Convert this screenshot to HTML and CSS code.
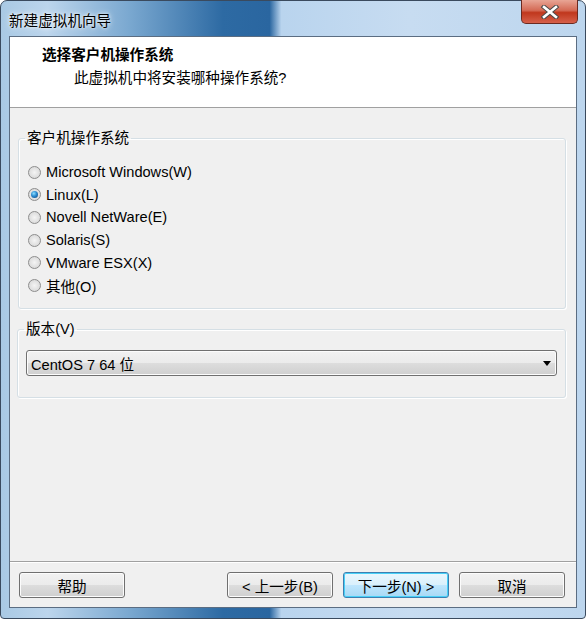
FILE: index.html
```html
<!DOCTYPE html>
<html lang="zh-CN">
<head>
    <meta charset="UTF-8">
    <title>新建虚拟机向导</title>
    <link rel="stylesheet" href="styles.css">
</head>
<body>
    <div class="window">
        <div class="titlebar">
            <span class="title">新建虚拟机向导</span>
            <div class="close-btn">
                <svg width="20" height="14" viewBox="0 0 20 14">
                    <path d="M4 2 L16 12 M16 2 L4 12" stroke="#4a4a4a" stroke-width="4.6" stroke-linecap="square"/>
                    <path d="M4 2 L16 12 M16 2 L4 12" stroke="#ffffff" stroke-width="2.6" stroke-linecap="square"/>
                </svg>
            </div>
        </div>

        <div class="client">
            <div class="header">
                <div class="header-title">选择客户机操作系统</div>
                <div class="header-sub">此虚拟机中将安装哪种操作系统?</div>
            </div>

            <div class="body">
                <fieldset class="group os-group">
                    <legend>客户机操作系统</legend>
                    <div class="radios">
                        <label class="radio"><span class="dot"></span>Microsoft Windows(W)</label>
                        <label class="radio"><span class="dot checked"></span>Linux(L)</label>
                        <label class="radio"><span class="dot"></span>Novell NetWare(E)</label>
                        <label class="radio"><span class="dot"></span>Solaris(S)</label>
                        <label class="radio"><span class="dot"></span>VMware ESX(X)</label>
                        <label class="radio"><span class="dot"></span>其他(O)</label>
                    </div>
                </fieldset>

                <fieldset class="group ver-group">
                    <legend>版本(V)</legend>
                    <div class="combo">
                        <span>CentOS 7 64 位</span>
                        <span class="arrow"></span>
                    </div>
                </fieldset>
            </div>

            <div class="footer">
                <button class="btn">帮助</button>
                <div class="spacer"></div>
                <button class="btn">&lt; 上一步(B)</button>
                <button class="btn default">下一步(N) &gt;</button>
                <button class="btn">取消</button>
            </div>
        </div>
    </div>
</body>
</html>
```

FILE: styles.css
```css
body {
    margin: 0;
    font-family: "Liberation Sans", "Noto Sans CJK SC", sans-serif;
    font-size: 14.6px;
    color: #000;
    background: #fff;
}
.window {
    width: 586px;
    height: 619px;
    box-sizing: border-box;
    padding: 0 8px 10px 8px;
    border-radius: 7px 7px 4px 4px;
    border: 1px solid #3a4a5e;
    background:
        linear-gradient(90deg, #a9c9e4 0%, #bcd5ec 8%, #7aa8d0 22%, #2d6aa3 38%, #2a66a0 46%, #b9d4ee 48%, #c7dcf1 70%, #bdd6ee 100%);
    display: flex;
    flex-direction: column;
}
.titlebar {
    height: 35px;
    flex-shrink: 0;
    display: flex;
    align-items: flex-start;
    position: relative;
}
.title {
    margin-top: 8px;
    color: #000;
    text-shadow: 0 0 6px rgba(255, 255, 255, 0.9), 0 0 3px rgba(255, 255, 255, 0.9);
}
.close-btn {
    position: absolute;
    right: -1px;
    top: -1px;
    width: 57px;
    height: 24px;
    box-sizing: border-box;
    border: 1px solid #6b2a20;
    border-top: none;
    border-radius: 0 0 5px 5px;
    background: linear-gradient(#e8a595 0%, #d46a55 45%, #c0371d 55%, #d6604a 100%);
    display: flex;
    align-items: center;
    justify-content: center;
}
.client {
    flex: 1;
    background: #f0f0f0;
    border: 1px solid #5b6d82;
    display: flex;
    flex-direction: column;
}
.header {
    background: #fff;
    height: 71px;
    box-sizing: border-box;
    border-bottom: 1px solid #a0a0a0;
    padding: 8px 0 0 32px;
}
.header-title {
    font-weight: bold;
    line-height: 20px;
}
.header-sub {
    margin-left: 32px;
    margin-top: 3px;
    line-height: 20px;
}
.body {
    flex: 1;
    padding: 21px 10px 0 8px;
    border-bottom: 1px solid #a0a0a0;
    box-shadow: 0 1px 0 #fff;
}
.group {
    margin: 0;
    border: 1px solid #d5dfe5;
    border-radius: 3px;
    box-shadow: inset 1px 1px 0 #fff, 1px 1px 0 #fff;
    padding: 0;
}
.group legend {
    padding: 0 2px;
    margin-left: 6px;
    line-height: 18px;
}
.os-group {
    height: 180px;
    box-sizing: border-box;
}
.radios {
    padding: 14px 0 0 9px;
}
.radio {
    display: flex;
    align-items: center;
    height: 22.6px;
}
.dot {
    width: 13px;
    height: 13px;
    box-sizing: border-box;
    border-radius: 50%;
    border: 1px solid #8d8d8d;
    background: radial-gradient(circle at 50% 50%, #f4f4f4 0, #dcdcdc 70%, #cfcfcf 100%);
    margin-right: 5px;
    position: relative;
}
.dot.checked::after {
    content: "";
    position: absolute;
    left: 2px;
    top: 2px;
    width: 7px;
    height: 7px;
    border-radius: 50%;
    background: radial-gradient(circle at 40% 35%, #8ee0ff 0, #2a8ad0 45%, #0d3e73 100%);
}
.ver-group {
    margin-top: 11px;
    height: 78px;
    box-sizing: border-box;
    margin-left: -1px;
}
.combo {
    margin: 12px 8px 0 8px;
    height: 26px;
    box-sizing: border-box;
    border: 1px solid #707070;
    border-radius: 3px;
    background: linear-gradient(#f2f2f2 0%, #ebebeb 50%, #dddddd 51%, #cfcfcf 100%);
    box-shadow: inset 0 0 0 1px #fcfcfc;
    display: flex;
    align-items: center;
    justify-content: space-between;
    padding: 0 5px 0 4px;
}
.arrow {
    width: 0;
    height: 0;
    border-left: 4px solid transparent;
    border-right: 4px solid transparent;
    border-top: 5px solid #000;
}
.footer {
    height: 45px;
    box-sizing: border-box;
    display: flex;
    align-items: flex-start;
    padding: 10px 11px 0 9px;
    gap: 10px;
}
.spacer {
    flex: 1;
}
.btn {
    font-family: inherit;
    font-size: 14.6px;
    width: 106px;
    height: 26px;
    margin: 0;
    padding: 0;
    border: 1px solid #707070;
    border-radius: 3px;
    background: linear-gradient(#f2f2f2 0%, #ebebeb 50%, #dddddd 51%, #cfcfcf 100%);
    box-shadow: inset 0 0 0 1px #fcfcfc;
    color: #000;
}
.btn.default {
    border-color: #3c7fb1;
    background: linear-gradient(#eaf6fd 0%, #d9f0fc 50%, #bee6fd 51%, #a7d9f5 100%);
    box-shadow: inset 0 0 0 1px #48d0f7;
}
```
